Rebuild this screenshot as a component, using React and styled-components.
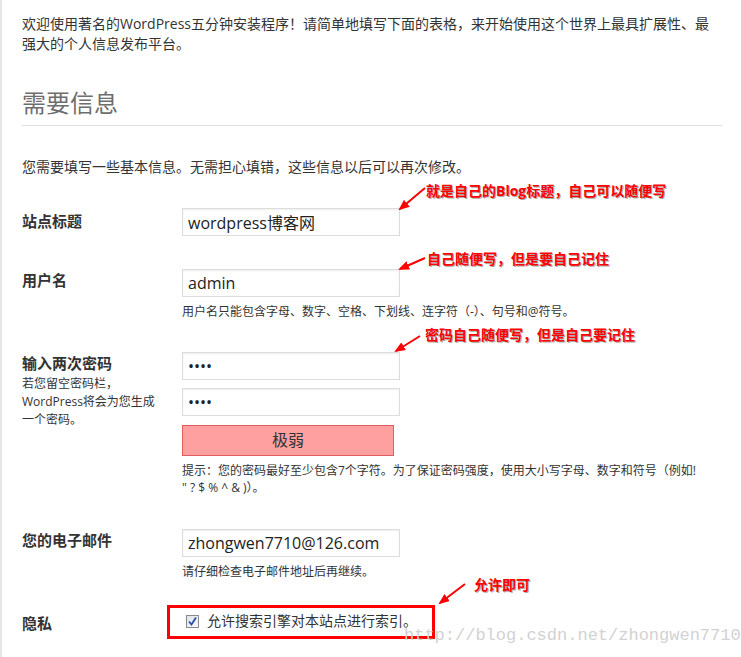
import React from "react";
import styled, { createGlobalStyle } from "styled-components";

const GlobalStyle = createGlobalStyle`
  body {
    margin: 0;
    background: #fff;
    font-family: "Open Sans", "Noto Sans CJK SC", sans-serif;
    color: #333;
  }
`;

const arrows = [
  { from: [423, 188], to: [398, 209] },
  { from: [423, 258], to: [398, 269] },
  { from: [418, 336], to: [394, 351] },
  { from: [463, 584], to: [438, 603] },
];

const notes = [
  { x: 424, y: 183, text: "就是自己的Blog标题，自己可以随便写" },
  { x: 425, y: 251, text: "自己随便写，但是要自己记住" },
  { x: 423, y: 327, text: "密码自己随便写，但是自己要记住" },
  { x: 472, y: 577, text: "允许即可" },
];

export default function App() {
  return (
    <Page>
      <GlobalStyle />
      <Intro>
        欢迎使用著名的WordPress五分钟安装程序！请简单地填写下面的表格，来开始使用这个世界上最具扩展性、最
        <br />
        强大的个人信息发布平台。
      </Intro>
      <Heading>需要信息</Heading>
      <Lead>您需要填写一些基本信息。无需担心填错，这些信息以后可以再次修改。</Lead>

      <Form>
        <Row>
          <Label $offset={2}>站点标题</Label>
          <Field>
            <TextInput readOnly defaultValue="wordpress博客网" />
          </Field>
        </Row>

        <Row>
          <Label>用户名</Label>
          <Field>
            <TextInput readOnly defaultValue="admin" />
            <Hint>用户名只能包含字母、数字、空格、下划线、连字符（-）、句号和@符号。</Hint>
          </Field>
        </Row>

        <Row>
          <Label>
            输入两次密码
            <LabelNote>
              若您留空密码栏，
              <br />
              WordPress将会为您生成
              <br />
              一个密码。
            </LabelNote>
          </Label>
          <Field>
            <TextInput type="password" readOnly defaultValue="1234" />
            <TextInput type="password" readOnly defaultValue="1234" />
            <Strength>极弱</Strength>
            <Hint>
              提示：您的密码最好至少包含7个字符。为了保证密码强度，使用大小写字母、数字和符号（例如!
              <br />" ? $ % ^ &amp; )）。
            </Hint>
          </Field>
        </Row>

        <Row>
          <Label>您的电子邮件</Label>
          <Field>
            <TextInput readOnly defaultValue="zhongwen7710@126.com" />
            <Hint>请仔细检查电子邮件地址后再继续。</Hint>
          </Field>
        </Row>

        <Row>
          <Label>隐私</Label>
          <Field>
            <CheckRow>
              <CheckBox>
                <svg width="11" height="11" viewBox="0 0 11 11">
                  <path
                    d="M2 5.5 L4.5 8.5 L9 1.5"
                    fill="none"
                    stroke="#2c4fa3"
                    strokeWidth="1.8"
                  />
                </svg>
              </CheckBox>
              允许搜索引擎对本站点进行索引。
            </CheckRow>
          </Field>
        </Row>
      </Form>

      <Overlay width="741" height="657">
        <defs>
          <marker
            id="head"
            markerUnits="userSpaceOnUse"
            markerWidth="11"
            markerHeight="9"
            refX="9"
            refY="4.5"
            orient="auto"
          >
            <path d="M0,0 L11,4.5 L0,9 z" fill="#ff0000" />
          </marker>
        </defs>
        {arrows.map((a, i) => (
          <line
            key={i}
            x1={a.from[0]}
            y1={a.from[1]}
            x2={a.to[0]}
            y2={a.to[1]}
            stroke="#ff0000"
            strokeWidth="2"
            markerEnd="url(#head)"
          />
        ))}
      </Overlay>

      {notes.map((n) => (
        <Note key={n.text} $x={n.x} $y={n.y}>
          {n.text}
        </Note>
      ))}

      <Frame />
      <Watermark>http://blog.csdn.net/zhongwen7710</Watermark>
    </Page>
  );
}

const Page = styled.div`
  position: relative;
  box-sizing: border-box;
  min-height: 657px;
  overflow: hidden;
  border-left: 2px solid #e6e6e6;
  padding: 14px 19px 0 20px;
`;

const Intro = styled.p`
  margin: 0;
  font-size: 14px;
  line-height: 20px;
`;

const Heading = styled.h1`
  margin: 34px 0 0;
  padding-bottom: 7px;
  border-bottom: 1px solid #dedede;
  font-size: 24px;
  font-weight: 400;
  line-height: 30px;
  color: #6e6e6e;
`;

const Lead = styled.p`
  margin: 31px 0 0;
  font-size: 14px;
  line-height: 20px;
`;

const Form = styled.div`
  margin-top: 15px;
`;

const Row = styled.div`
  display: grid;
  grid-template-columns: 160px 1fr;
  padding: 16px 0 16.5px;
`;

const Label = styled.div`
  padding-top: ${(p) => p.$offset || 0}px;
  font-size: 15px;
  font-weight: 700;
  line-height: 22px;
  color: #333;
`;

const LabelNote = styled.div`
  margin-top: 1px;
  font-size: 12px;
  font-weight: 400;
  line-height: 18px;
`;

const Field = styled.div`
  display: flex;
  flex-direction: column;
  align-items: flex-start;
`;

const TextInput = styled.input`
  box-sizing: border-box;
  width: 218px;
  height: 28px;
  margin: 0;
  padding: 0 5px;
  border: 1px solid #ddd;
  box-shadow: inset 0 1px 2px rgba(0, 0, 0, 0.07);
  background: #fff;
  font: 16px "Open Sans", "Noto Sans CJK SC", sans-serif;
  color: #222;
  outline: none;

  & + & {
    margin-top: 8px;
  }
`;

const Strength = styled.div`
  box-sizing: border-box;
  width: 212px;
  height: 31px;
  margin-top: 9px;
  background: #ffa0a0;
  border: 1px solid #e35b5b;
  text-align: center;
  font-size: 16px;
  line-height: 29px;
  color: #333;
`;

const Hint = styled.p`
  margin: 6px 0 0;
  font-size: 12px;
  line-height: 17px;
`;

const CheckRow = styled.label`
  display: flex;
  align-items: center;
  gap: 8px;
  padding-left: 4px;
  font-size: 14px;
  line-height: 18px;
`;

const CheckBox = styled.span`
  display: inline-flex;
  align-items: center;
  justify-content: center;
  box-sizing: border-box;
  width: 13px;
  height: 13px;
  border: 1px solid #8a8a8a;
  background: linear-gradient(135deg, #dfe3ea, #f7f8fa);
`;

const Overlay = styled.svg`
  position: absolute;
  left: 0;
  top: 0;
  pointer-events: none;
`;

const Note = styled.span`
  position: absolute;
  left: ${(p) => p.$x}px;
  top: ${(p) => p.$y}px;
  font-size: 14px;
  font-weight: 700;
  line-height: 16px;
  color: #ff0000;
  white-space: nowrap;
  text-shadow: 1px 1px 0 #aaa;
`;

const Frame = styled.div`
  position: absolute;
  left: 165px;
  top: 605px;
  width: 268px;
  height: 34px;
  box-sizing: border-box;
  border: 3px solid #ff0000;
  pointer-events: none;
`;

const Watermark = styled.div`
  position: absolute;
  left: 402px;
  top: 626px;
  font-family: "Liberation Mono", monospace;
  font-size: 17px;
  line-height: 20px;
  color: #d2d2d2;
  white-space: nowrap;
  pointer-events: none;
`;
